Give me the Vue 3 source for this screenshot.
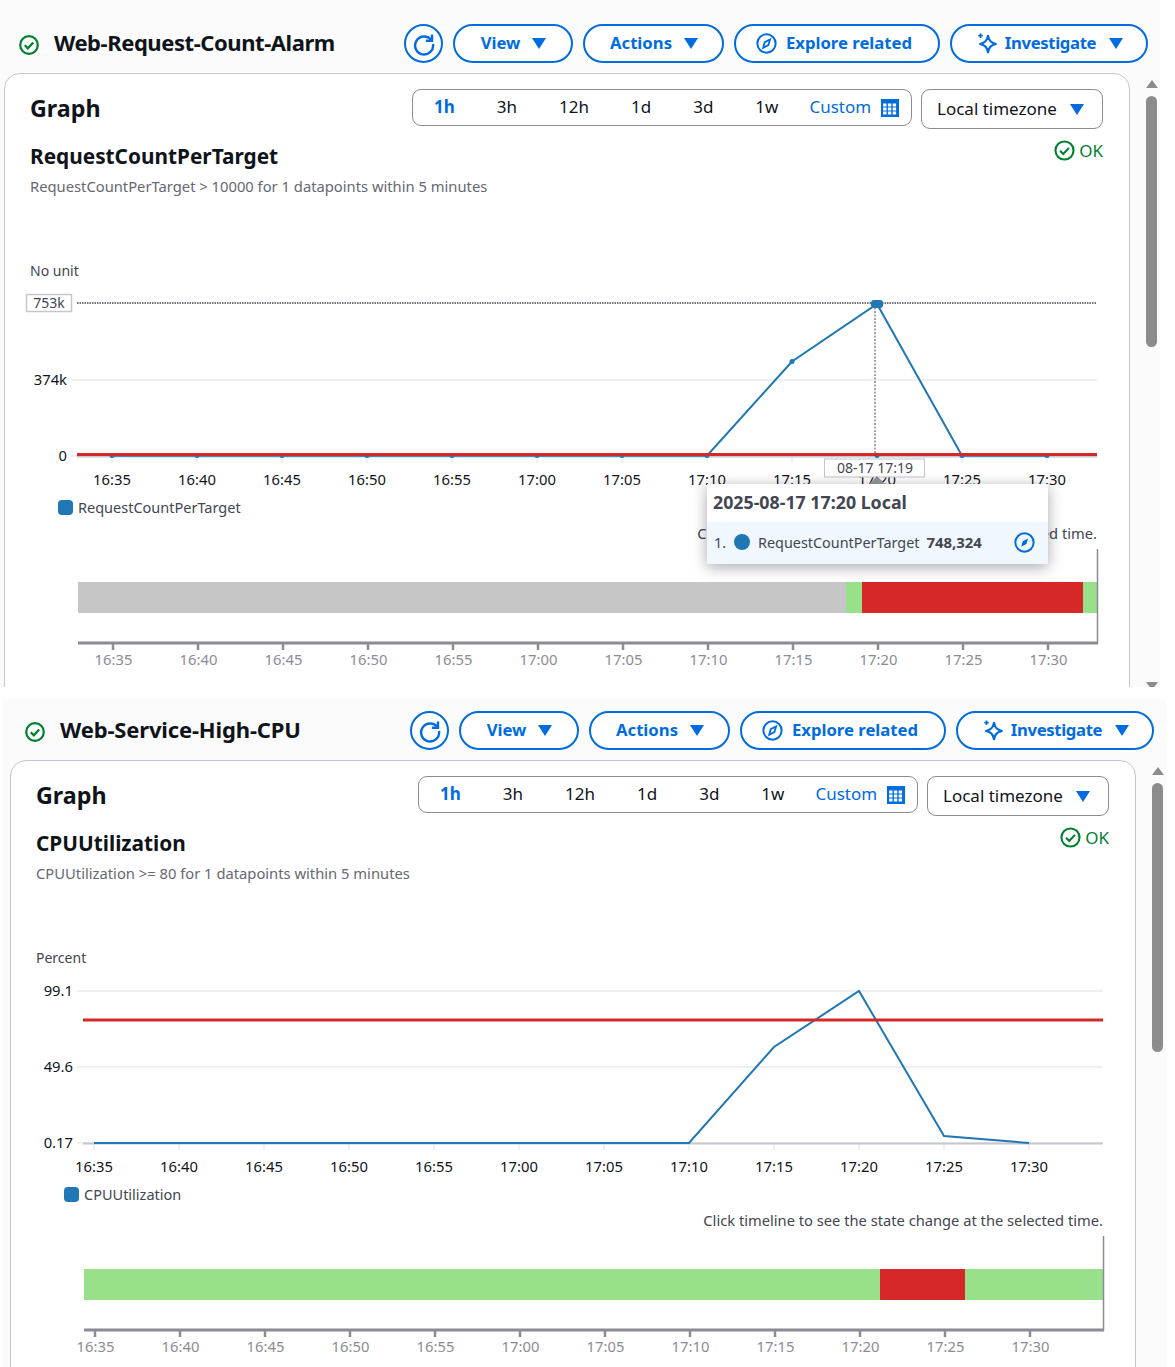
<template>
  <div class="page">
    <section
      v-for="alarm in alarms"
      :key="alarm.name"
      class="panel"
      :class="alarm.panelClass"
    >
      <div class="main">
        <header class="head">
          <svg class="status-icon" viewBox="0 0 20 20">
            <circle cx="10" cy="10" r="8.800" fill="none" stroke="#00802f" stroke-width="2.200" />
            <path d="M5.800 10.300l3 3 5.400-5.800" fill="none" stroke="#00802f" stroke-width="2.200" />
          </svg>
          <h1 :style="{ letterSpacing: alarm.titleSpacing }">{{ alarm.name }}</h1>
          <div class="actions">
            <button class="btn round">
              <svg viewBox="0 0 24 24" width="24" height="24">
                <path d="M19.400 8.200A9 9 0 1 0 21 12" fill="none" stroke="#006ce0" stroke-width="2.400" />
                <path d="M20 2.500v6.200h-6.200" fill="none" stroke="#006ce0" stroke-width="2.400" />
              </svg>
            </button>
            <button class="btn w-view"><span>View</span> <i class="caret"></i></button>
            <button class="btn w-actions"><span>Actions</span> <i class="caret"></i></button>
            <button class="btn w-explore">
              <svg viewBox="0 0 20 20" width="21" height="21">
                <circle cx="10" cy="10" r="8.700" fill="none" stroke="#006ce0" stroke-width="1.900" />
                <path d="M13.400 6.200l-1.600 5.300-4.900 2.600 1.400-5.400z" fill="none" stroke="#006ce0" stroke-width="1.700" />
              </svg>
              <span>Explore related</span>
            </button>
            <button class="btn w-invest">
              <svg viewBox="0 0 22 22" width="22" height="22">
                <path d="M12 3c1 4.800 2.800 6.700 7.800 8-5 1.300-6.800 3.200-7.800 8.200-1-5-2.800-6.900-7.800-8.200 5-1.300 6.800-3.200 7.800-8z" fill="none" stroke="#006ce0" stroke-width="2.300" stroke-linejoin="round" />
                <path d="M4.500 0.500v4.400M2.300 2.700h4.400" stroke="#006ce0" stroke-width="1.700" />
              </svg>
              <span>Investigate</span> <i class="caret"></i>
            </button>
          </div>
        </header>

        <div class="card">
          <div class="card-top">
            <h2>Graph</h2>
            <div class="range">
              <span
                v-for="(r, i) in ranges"
                :key="r"
                class="range-item"
                :class="{ on: i === 0 }"
              >{{ r }}</span>
              <span class="custom">Custom</span>
              <svg class="cal" viewBox="0 0 18 18" width="18" height="18">
                <rect width="18" height="18" fill="#006ce0" />
                <rect
                  v-for="c in calCells"
                  :key="c.k"
                  :x="c.x" :y="c.y"
                  width="3.400" height="3"
                  fill="#fff"
                />
              </svg>
            </div>
            <div class="tz"><span>Local timezone</span> <i class="caret"></i></div>
          </div>

          <div class="metric">
            <div>
              <h3>{{ alarm.metric }}</h3>
              <p class="sub">{{ alarm.desc }}</p>
            </div>
            <div class="ok">
              <svg viewBox="0 0 20 20" width="21" height="21">
                <circle cx="10" cy="10" r="8.600" fill="none" stroke="#00802f" stroke-width="2" />
                <path d="M5.800 10.300l3 3 5.400-5.800" fill="none" stroke="#00802f" stroke-width="2" />
              </svg>
              OK
            </div>
          </div>

          <div class="unit">{{ alarm.unit }}</div>

          <svg class="plot" viewBox="5 285 1124 205" width="1124" height="205">
            <line
              v-for="g in alarm.grid"
              :key="g.y"
              :x1="71" :x2="1097" :y1="g.y" :y2="g.y"
              stroke="#ebebf0" stroke-width="1.500"
            />
            <line
              v-for="(x, i) in alarm.tickX"
              :key="'t' + i"
              :x1="x" :x2="x" y1="457" y2="463"
              stroke="#ebebf0" stroke-width="1.500"
            />
            <line x1="77" x2="1097" y1="456.500" y2="456.500" stroke="#c6c6cd" stroke-width="2" />
            <polyline :points="alarm.points" fill="none" stroke="#1f77b4" stroke-width="2" />
            <template v-if="alarm.hover">
              <circle
                v-for="(x, i) in alarm.tickX"
                :key="'d' + i"
                :cx="x"
                :cy="i === 8 ? 361.500 : 455.500"
                r="2.500"
                fill="#1f77b4"
              />
            </template>
            <line x1="77" x2="1097" :y1="alarm.threshold" :y2="alarm.threshold" stroke="#d62828" stroke-width="3" />
            <text
              v-for="g in alarm.grid"
              :key="'l' + g.y"
              x="67" :y="g.y + 5"
              class="tx-y"
              text-anchor="end"
            >{{ g.label }}</text>
            <text
              v-for="(x, i) in alarm.tickX"
              :key="'x' + i"
              :x="x" y="485"
              class="tx-x"
              text-anchor="middle"
            >{{ times[i] }}</text>
            <template v-if="alarm.hover">
              <line x1="77" x2="1097" y1="303" y2="303" stroke="#424650" stroke-width="1.500" stroke-dasharray="1.500 1" />
              <rect x="26.500" y="294.500" width="45" height="17" fill="#fff" stroke="#c6c6cd" stroke-width="1.500" />
              <text x="49" y="308" class="tx-hover" text-anchor="middle">753k</text>
              <line x1="875" x2="875" y1="304" y2="456" stroke="#424650" stroke-width="1" stroke-dasharray="2 1.500" />
              <rect x="871" y="300" width="12" height="8" rx="3" fill="#1f77b4" />
              <rect x="824.500" y="459" width="100" height="18" fill="#fff" stroke="#c6c6cd" />
              <text x="875" y="473" class="tx-hover" text-anchor="middle">08-17 17:19</text>
            </template>
          </svg>

          <div class="legend"><i></i>{{ alarm.metric }}</div>
          <div class="note">Click timeline to see the state change at the selected time.</div>

          <svg class="timeline" viewBox="5 545 1124 130" width="1124" height="130">
            <rect
              v-for="s in alarm.segments"
              :key="s.x"
              :x="s.x" y="582" :width="s.w" height="31"
              :fill="s.fill"
            />
            <line x1="1097.500" x2="1097.500" y1="549" y2="644" stroke="#8c8c94" stroke-width="1.500" />
            <line x1="78" x2="1098" y1="643" y2="643" stroke="#8c8c94" stroke-width="3" />
            <g v-for="(x, i) in alarm.tlTickX" :key="'tl' + i">
              <line :x1="x" :x2="x" y1="644" y2="650" stroke="#8c8c94" stroke-width="2.500" />
              <text :x="x + 0.500" y="665" class="tx-tl" text-anchor="middle">{{ times[i] }}</text>
            </g>
          </svg>

          <div v-if="alarm.hover" class="tip">
            <div class="tip-title">2025-08-17 17:20 Local</div>
            <div class="tip-row">
              <span class="tip-num">1.</span>
              <i class="tip-dot"></i>
              <span class="tip-name">RequestCountPerTarget</span>
              <b>748,324</b>
              <svg viewBox="0 0 20 20" width="21" height="21">
                <circle cx="10" cy="10" r="8.700" fill="none" stroke="#006ce0" stroke-width="1.900" />
                <path d="M13.400 6.200l-1.600 5.300-4.900 2.600 1.400-5.400z" fill="#006ce0" />
              </svg>
            </div>
          </div>
        </div>
      </div>

      <div class="scroll">
        <i class="arrow-up"></i>
        <div class="thumb" :style="{ height: alarm.thumb + 'px' }"></div>
        <i v-if="alarm.hover" class="arrow-down"></i>
      </div>
    </section>
  </div>
</template>

<script setup>
const ranges = ["1h", "3h", "12h", "1d", "3d", "1w"];

const times = [
  "16:35", "16:40", "16:45", "16:50", "16:55", "17:00",
  "17:05", "17:10", "17:15", "17:20", "17:25", "17:30",
];

const calCells = [];
for (let r = 0; r < 3; r++) {
  for (let c = 0; c < 3; c++) {
    calCells.push({ k: r + "-" + c, x: 2.1 + c * 4.8, y: 4.5 + r * 4 });
  }
}

const ticks = (start) => times.map((_, i) => start + i * 85);

const alarms = [
  {
    name: "Web-Request-Count-Alarm",
    panelClass: "first",
    titleSpacing: "-0.43px",
    metric: "RequestCountPerTarget",
    desc: "RequestCountPerTarget > 10000 for 1 datapoints within 5 minutes",
    unit: "No unit",
    hover: true,
    threshold: 454.5,
    thumb: 251,
    tickX: ticks(112),
    tlTickX: ticks(113),
    grid: [
      { y: 380, label: "374k" },
      { y: 456, label: "0" },
    ],
    points: "112,455.7 707,455.7 792,361.5 877,304 962,455.7 1047,455.7",
    segments: [
      { x: 78, w: 768, fill: "#c6c6c6" },
      { x: 846, w: 16, fill: "#98e08a" },
      { x: 862, w: 221, fill: "#d62828" },
      { x: 1083, w: 14, fill: "#98e08a" },
    ],
  },
  {
    name: "Web-Service-High-CPU",
    panelClass: "second",
    titleSpacing: "-0.15px",
    metric: "CPUUtilization",
    desc: "CPUUtilization >= 80 for 1 datapoints within 5 minutes",
    unit: "Percent",
    hover: false,
    threshold: 333,
    thumb: 269,
    tickX: ticks(88),
    tlTickX: ticks(89),
    grid: [
      { y: 304, label: "99.1" },
      { y: 380, label: "49.6" },
      { y: 456, label: "0.17" },
    ],
    points: "88,456 683,456 768,360 853,304 938,449 1023,456",
    segments: [
      { x: 78, w: 796, fill: "#98e08a" },
      { x: 874, w: 85, fill: "#d62828" },
      { x: 959, w: 138, fill: "#98e08a" },
    ],
  },
];
</script>

<style>
html,
body {
  margin: 0;
  background: #fff;
}
</style>

<style scoped>
.page {
  height: 1367px;
  overflow: hidden;
  font-family: "Noto Sans", sans-serif;
  color: #0f141a;
}
.panel {
  display: flex;
  width: 1163px;
  box-sizing: border-box;
  background: #fbfbfc;
  overflow: hidden;
}
.panel.first {
  height: 687px;
  margin-left: -3px;
  padding-top: 24px;
}
.panel.second {
  height: 668px;
  margin-left: 3px;
  margin-top: 12px;
  padding-top: 12px;
}
.main {
  width: 1133px;
  flex: none;
  padding-left: 7px;
  box-sizing: border-box;
}
.head {
  display: flex;
  align-items: center;
  height: 39px;
  margin-bottom: 10px;
  margin-right: -18px;
}
.status-icon {
  width: 20px;
  height: 20px;
  margin-left: 15px;
  margin-top: 3px;
  flex: none;
}
h1 {
  margin: 0 0 4px 15px;
  font-size: 22px;
  font-weight: 700;
  white-space: nowrap;
}
.actions {
  display: flex;
  gap: 10px;
  margin-left: auto;
  flex: none;
}
.btn {
  display: flex;
  align-items: center;
  justify-content: center;
  gap: 9px;
  height: 39px;
  box-sizing: border-box;
  border: 2px solid #006ce0;
  border-radius: 20px;
  background: #fff;
  color: #006ce0;
  font: 700 16.700px "Noto Sans", sans-serif;
  padding: 0;
}
.btn span {
  margin-bottom: 2px;
}
.round { width: 39px; }
.w-view { width: 120px; gap: 12px; padding-left: 1px; }
.w-actions { width: 141px; gap: 12px; padding-left: 1px; }
.w-explore { width: 206px; padding-right: 6px; }
.w-invest { width: 198px; gap: 7px; padding-left: 1px; }
.w-invest span { letter-spacing: -0.35px; }
.w-invest .caret { margin-left: 6px; }
.caret {
  display: inline-block;
  width: 0;
  height: 0;
  border-left: 7px solid transparent;
  border-right: 7px solid transparent;
  border-top: 11px solid #006ce0;
}
.card {
  position: relative;
  width: 1126px;
  height: 700px;
  box-sizing: border-box;
  background: #fff;
  border: 1px solid #c6c6cd;
  border-radius: 16px 16px 0 0;
}
.card-top {
  display: flex;
  align-items: flex-start;
  padding: 15px 26px 0 25px;
  height: 40px;
}
h2 {
  margin: 0;
  font-size: 23.300px;
  line-height: 38px;
  font-weight: 700;
}
.range {
  display: flex;
  align-items: center;
  height: 37px;
  box-sizing: border-box;
  margin-left: auto;
  width: 500px;
  border: 1px solid #8c8c94;
  border-radius: 9px;
  font-size: 17px;
}
.range-item,
.custom {
  margin-bottom: 3px;
}
.range-item {
  padding: 0 21px;
}
.range-item.on {
  color: #006ce0;
  font-weight: 700;
}
.custom {
  color: #006ce0;
  margin-left: 10px;
}
.cal {
  margin-left: 10px;
}
.tz {
  display: flex;
  align-items: center;
  justify-content: space-between;
  width: 182px;
  height: 40px;
  margin-left: 9px;
  padding: 0 18px 0 15px;
  box-sizing: border-box;
  border: 1px solid #8c8c94;
  border-radius: 9px;
  font-size: 17px;
}
.tz span {
  margin-bottom: 2px;
}
.metric {
  display: flex;
  justify-content: space-between;
  padding: 12px 26px 0 25px;
}
h3 {
  margin: 0;
  font-size: 20.800px;
  line-height: 30px;
  font-weight: 700;
}
.sub {
  margin: 5px 0 0;
  font-size: 14.750px;
  line-height: 20px;
  color: #656871;
}
.ok {
  display: flex;
  align-items: center;
  gap: 4px;
  height: 18px;
  color: #00802f;
  font-size: 17px;
}
.unit {
  margin: 65px 0 0 25px;
  font-size: 14px;
  line-height: 20px;
  color: #424650;
}
.plot {
  display: block;
  margin-top: 4px;
}
.tx-y,
.tx-x {
  font-size: 14.800px;
  fill: #0f141a;
}
.tx-hover {
  font-size: 14px;
  fill: #424650;
}
.tx-tl {
  font-size: 14.800px;
  fill: #8c8c94;
}
.legend {
  display: flex;
  align-items: center;
  gap: 5px;
  margin: 7px 0 0 53px;
  font-size: 14.500px;
  line-height: 20px;
  color: #424650;
}
.legend i {
  width: 15px;
  height: 15px;
  margin-top: 1px;
  border-radius: 4px;
  background: #1f77b4;
}
.note {
  margin-top: 6px;
  padding-right: 32px;
  text-align: right;
  font-size: 14.700px;
  line-height: 20px;
  color: #424650;
}
.timeline {
  display: block;
  margin-top: 2px;
}
.tip {
  position: absolute;
  left: 702px;
  top: 410px;
  width: 341px;
  height: 80px;
  background: #fff;
  box-shadow: 0 3px 14px rgba(0, 7, 22, 0.35);
  color: #424650;
}
.tip::before {
  content: "";
  position: absolute;
  left: 162px;
  top: -8px;
  border-left: 8px solid transparent;
  border-right: 8px solid transparent;
  border-bottom: 8px solid #8c8c94;
}
.tip-title {
  height: 38px;
  padding-left: 6px;
  font-size: 17.800px;
  font-weight: 700;
  line-height: 36px;
}
.tip-row {
  display: flex;
  align-items: center;
  height: 42px;
  box-sizing: border-box;
  padding: 0 0 2px 7px;
  background: #f0f7ff;
  font-size: 14.400px;
}
.tip-dot {
  width: 16px;
  height: 16px;
  border-radius: 50%;
  margin: 0 8px 0 9px;
  background: #1f77b4;
}
.tip-num { width: 11px; }
.tip-row b {
  margin-left: 7px;
  font-size: 14.900px;
}
.tip-row svg {
  margin-left: auto;
  margin-right: 13px;
}
.scroll {
  position: relative;
  flex: 1;
  padding: 56px 0 0 16px;
}
.arrow-up {
  display: block;
  width: 0;
  height: 0;
  margin-bottom: 8px;
  border-left: 6px solid transparent;
  border-right: 6px solid transparent;
  border-bottom: 8px solid #8c8c8c;
}
.arrow-down {
  position: absolute;
  left: 16px;
  bottom: -3px;
  width: 0;
  height: 0;
  border-left: 6px solid transparent;
  border-right: 6px solid transparent;
  border-top: 8px solid #8c8c8c;
}
.thumb {
  width: 11px;
  border-radius: 6px;
  background: #8c8c8c;
}
</style>
